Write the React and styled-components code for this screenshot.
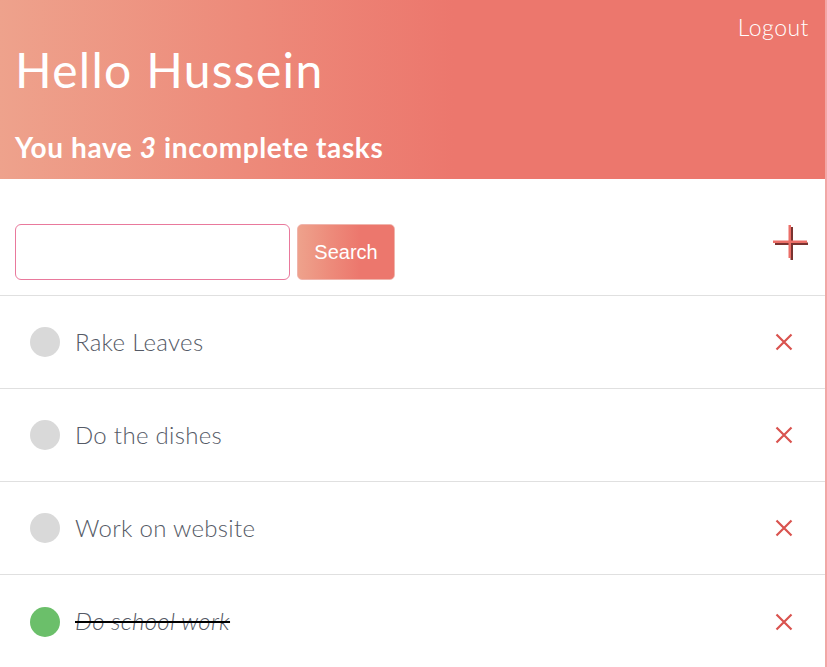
import React from "react";
import styled, { createGlobalStyle } from "styled-components";

const Global = createGlobalStyle`
  html, body { margin: 0; padding: 0; background: #fff; }
  * { box-sizing: border-box; }
`;

const Page = styled.div`
  width: 827px;
  min-height: 667px;
  border-right: 2px solid #f2a7a6;
  font-family: "Lato", "Open Sans", sans-serif;
`;

const Header = styled.header`
  height: 179px;
  background: linear-gradient(to right, #eea28c 0%, #ed8a7a 30%, #ec776d 55%, #ec776d 100%);
  color: #fff;
  display: flex;
  flex-direction: column;
  padding: 13px 16px 0 15px;
`;

const TopRow = styled.div`
  display: flex;
  justify-content: flex-end;
`;

const Logout = styled.span`
  font-size: 23px;
  font-weight: 300;
  line-height: 28px;
  letter-spacing: 0.5px;
`;

const Title = styled.h1`
  margin: 1px 0 0;
  font-size: 48px;
  font-weight: 400;
  line-height: 56px;
  letter-spacing: 1.3px;
`;

const Subtitle = styled.h2`
  margin: 32px 0 0;
  font-size: 28px;
  font-weight: 700;
  line-height: 34px;
  letter-spacing: 0.6px;
  em { font-style: italic; font-weight: 700; }
`;

const Toolbar = styled.div`
  display: flex;
  align-items: center;
  padding: 45px 17px 15px 15px;
  gap: 7px;
  border-bottom: 1px solid #e0e0e0;
`;

const SearchInput = styled.input`
  width: 275px;
  height: 56px;
  border: 1px solid #e9799c;
  border-radius: 6px;
  outline: none;
  font-size: 18px;
  padding: 0 10px;
`;

const SearchButton = styled.button`
  width: 98px;
  height: 56px;
  border: 1px solid #f0b5ad;
  border-radius: 5px;
  background: linear-gradient(to right, #eea28c 0%, #ed8a7a 35%, #ec776d 65%, #ec776d 100%);
  color: #fff;
  font-family: "Liberation Sans", Arial, sans-serif;
  font-size: 20px;
  cursor: pointer;
`;

const Spacer = styled.div`
  flex: 1;
`;

const AddButton = styled.button`
  border: none;
  background: none;
  padding: 0;
  width: 36px;
  height: 36px;
  display: flex;
  align-items: center;
  justify-content: center;
  margin-top: -20px;
  cursor: pointer;
`;

const List = styled.ul`
  list-style: none;
  margin: 0;
  padding: 0;
`;

const Row = styled.li`
  height: 93px;
  display: flex;
  align-items: center;
  padding: 0 31px 0 30px;
  border-bottom: ${(p) => (p.$last ? "none" : "1px solid #e0e0e0")};
`;

const Dot = styled.span`
  width: 30px;
  height: 30px;
  border-radius: 50%;
  background: ${(p) => (p.$done ? "#6bbf6a" : "#d9d9d9")};
  flex: none;
`;

const TaskText = styled.span`
  margin-left: 15px;
  margin-top: -2px;
  font-size: 24px;
  font-weight: 300;
  letter-spacing: 0.3px;
  color: #555a66;
  flex: 1;
  font-style: ${(p) => (p.$done ? "italic" : "normal")};
  text-decoration: ${(p) => (p.$done ? "line-through #000 2px" : "none")};
`;

const Remove = styled.button`
  border: none;
  background: none;
  padding: 0;
  width: 20px;
  height: 20px;
  display: flex;
  align-items: center;
  justify-content: center;
  cursor: pointer;
`;

const PlusIcon = () => (
  <svg width="36" height="36" viewBox="0 0 36 36">
    <rect x="18.5" y="3" width="2.5" height="33" fill="#7a3330" />
    <rect x="3" y="18.5" width="34" height="2.5" fill="#7a3330" />
    <rect x="16.5" y="1" width="2.5" height="33" fill="#ec6f68" />
    <rect x="1" y="16.5" width="34" height="2.5" fill="#ec6f68" />
  </svg>
);

const XIcon = () => (
  <svg width="18" height="18" viewBox="0 0 18 18">
    <path d="M1.5 1.5 L16.5 16.5 M16.5 1.5 L1.5 16.5" stroke="#d9534f" strokeWidth="2.2" strokeLinecap="butt" />
  </svg>
);

const tasks = [
  { text: "Rake Leaves", done: false },
  { text: "Do the dishes", done: false },
  { text: "Work on website", done: false },
  { text: "Do school work", done: true },
];

export default function App() {
  return (
    <Page>
      <Global />
      <Header>
        <TopRow>
          <Logout>Logout</Logout>
        </TopRow>
        <Title>Hello Hussein</Title>
        <Subtitle>
          You have <em>3</em> incomplete tasks
        </Subtitle>
      </Header>
      <Toolbar>
        <SearchInput type="text" />
        <SearchButton>Search</SearchButton>
        <Spacer />
        <AddButton aria-label="Add task">
          <PlusIcon />
        </AddButton>
      </Toolbar>
      <List>
        {tasks.map((t, i) => (
          <Row key={t.text} $last={i === tasks.length - 1}>
            <Dot $done={t.done} />
            <TaskText $done={t.done}>{t.text}</TaskText>
            <Remove aria-label="Remove">
              <XIcon />
            </Remove>
          </Row>
        ))}
      </List>
    </Page>
  );
}
